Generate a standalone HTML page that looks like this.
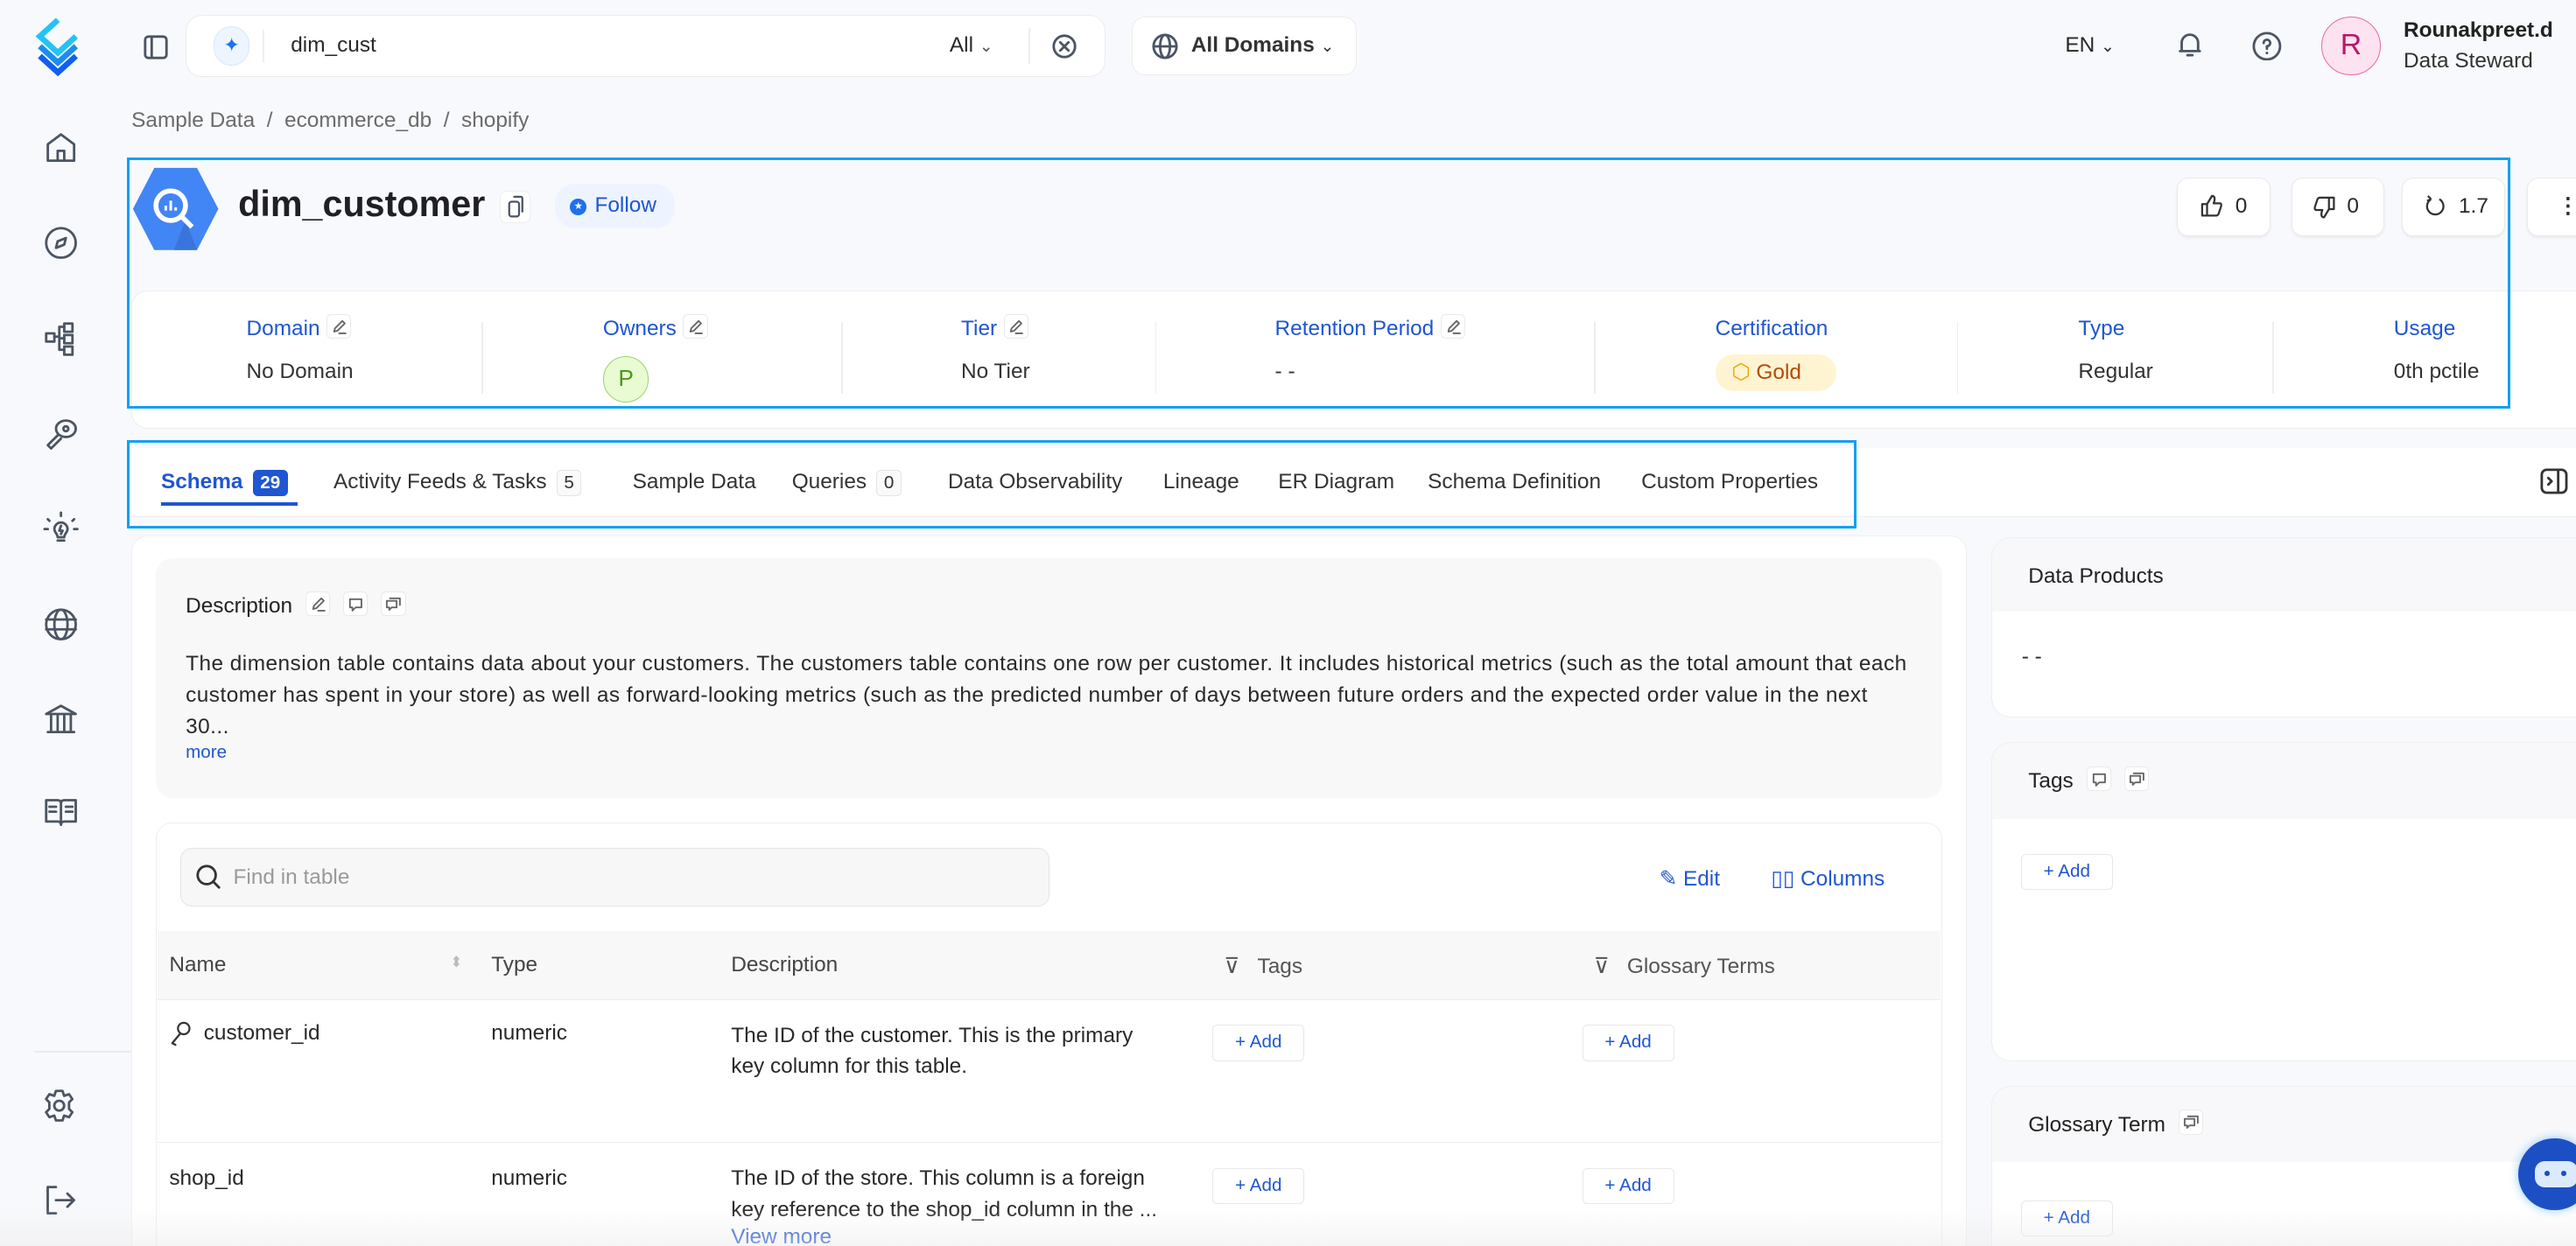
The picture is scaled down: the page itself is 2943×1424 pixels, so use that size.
<!DOCTYPE html>
<html><head><meta charset="utf-8"><style>
*{box-sizing:border-box;margin:0;padding:0}
html,body{width:2943px;height:1424px;overflow:hidden;background:#f8f9fc}
#z{zoom:1.877;width:1568px;height:759px;position:relative;font-family:"Liberation Sans",sans-serif;color:#292929;font-size:13px;overflow:hidden}
.a{position:absolute}
.ic{position:absolute;fill:none;stroke:#4b5563;stroke-width:1.5;stroke-linecap:round;stroke-linejoin:round}
.white{background:#fff}
.lbl{color:#1f56d1;font-size:13px;position:absolute;top:193px}
.val{color:#333;font-size:13px;position:absolute;top:219px}
.sep{position:absolute;top:196px;width:1px;height:44px;background:#eee}
.pen{display:inline-block;width:15px;height:15px;border:1px solid #eaeaea;border-radius:3px;vertical-align:middle;margin-left:4px;position:relative;top:-2px;background:#fff}
.pen svg{position:absolute;left:2px;top:2px;fill:none;stroke:#666;stroke-width:1;stroke-linecap:round;stroke-linejoin:round}
.tab{position:absolute;top:286px;font-size:13px;color:#333}
.badge{display:inline-block;border:1px solid #e4e4e4;border-radius:3px;font-size:11px;padding:0 4px;margin-left:6px;background:#fafafa;line-height:15px}
.btn{position:absolute;background:#fff;border:1px solid #eaeaea;border-radius:7px;box-shadow:0 1px 2px rgba(0,0,0,.06);height:36px;top:108px;font-size:13px;line-height:34px}
.btn svg{position:absolute;top:10px;fill:none;stroke:#333;stroke-width:1.2;stroke-linejoin:round}
.btn span{position:absolute;top:0}
.add{position:absolute;border:1px solid #e8e8e8;border-radius:3px;background:#fff;color:#1f56d1;font-size:11px;width:56px;height:22px;line-height:20px;text-align:center}
.card{position:absolute;background:#fff;border:1px solid #eee;border-radius:12px;overflow:hidden}
.hd{background:#f8f8fa;height:45px;padding:16px 22px;font-size:13px;color:#222}
</style></head><body><div id="z">

<!-- sidebar -->
<svg class="a" style="left:20px;top:10px" width="30" height="38" viewBox="0 0 30 38">
<path d="M15 2 L4 12 L15 22 L26 12" fill="none" stroke="#22c3f5" stroke-width="3.5"/>
<path d="M4 18 L15 28 L26 18" fill="none" stroke="#1a8ef0" stroke-width="3.5"/>
<path d="M4 24 L15 34 L26 24" fill="none" stroke="#0f5ff0" stroke-width="3.5"/></svg>
<svg class="ic" style="left:26px;top:79px" width="22" height="22" viewBox="0 0 22 22"><path d="M3 9 L11 3 L19 9 V19 H3 Z M9 19 V13 H13 V19"/></svg>
<svg class="ic" style="left:26px;top:137px" width="22" height="22" viewBox="0 0 22 22"><circle cx="11" cy="11" r="9"/><path d="M14 8 L9 10 L8 14 L13 12 Z"/></svg>
<svg class="ic" style="left:26px;top:195px" width="22" height="22" viewBox="0 0 22 22"><rect x="2" y="8" width="5" height="5"/><rect x="13" y="2" width="5" height="5"/><rect x="13" y="9" width="5" height="5"/><rect x="13" y="16" width="5" height="5"/><path d="M7 10 H10 V4 H13 M10 11 H13 M10 10 V18 H13"/></svg>
<svg class="ic" style="left:26px;top:253px" width="22" height="22" viewBox="0 0 22 22"><ellipse cx="14" cy="8" rx="6" ry="5"/><circle cx="14" cy="8" r="1.5"/><path d="M9 12 L3 18 L5 20 L11 14"/></svg>
<svg class="ic" style="left:26px;top:311px" width="22" height="22" viewBox="0 0 22 22"><path d="M7 11 A4 4 0 1 1 15 11 C15 13 13 14 13 16 H9 C9 14 7 13 7 11 Z M9 18 H13 M11 1 V3 M3 5 L4 6 M19 5 L18 6 M1 11 H3 M19 11 H21 M11 9 L10 12 H12 L11 14"/></svg>
<svg class="ic" style="left:26px;top:369px" width="22" height="22" viewBox="0 0 22 22"><circle cx="11" cy="11" r="9"/><ellipse cx="11" cy="11" rx="4" ry="9"/><path d="M2 8 H20 M2 14 H20"/></svg>
<svg class="ic" style="left:26px;top:427px" width="22" height="22" viewBox="0 0 22 22"><path d="M2 8 L11 3 L20 8 Z M3 19 H19 M5 9 V18 M9 9 V18 M13 9 V18 M17 9 V18"/></svg>
<svg class="ic" style="left:26px;top:483px" width="22" height="22" viewBox="0 0 22 22"><path d="M2 4 H9 Q11 4 11 6 V19 Q11 17 9 17 H2 Z M20 4 H13 Q11 4 11 6 V19 Q11 17 13 17 H20 Z M4 8 H8 M4 11 H8 M14 8 H18 M14 11 H18"/></svg>
<div class="a" style="left:21px;top:640px;width:95px;height:1px;background:#eaeaea"></div>
<svg class="ic" style="left:25px;top:662px" width="22" height="22" viewBox="0 0 22 22"><circle cx="11" cy="11" r="3"/><path d="M9 2 H13 L14 5 L17 4 L19 7 L17 9 L17 13 L19 15 L17 18 L14 17 L13 20 H9 L8 17 L5 18 L3 15 L5 13 V9 L3 7 L5 4 L8 5 Z"/></svg>
<svg class="ic" style="left:25px;top:720px" width="22" height="22" viewBox="0 0 22 22"><path d="M9 3 H4 V19 H9 M9 11 H20 M16 7 L20 11 L16 15"/></svg>

<!-- top bar -->
<svg class="ic" style="left:87px;top:21px" width="16" height="16" viewBox="0 0 16 16"><rect x="1.5" y="1.5" width="13" height="13" rx="2"/><path d="M5.5 2 V14"/></svg>
<div class="a white" style="left:113px;top:9px;width:560px;height:38px;border:1px solid #ececec;border-radius:10px"></div>
<div class="a" style="left:130px;top:16px;width:22px;height:24px;border-radius:11px;background:#eef5ff;border:1px solid #d6e6ff;color:#1f6ff0;text-align:center;line-height:22px;font-size:12px">✦</div>
<div class="a" style="left:160px;top:18px;width:1px;height:20px;background:#eee"></div>
<div class="a" style="left:177px;top:20px;font-size:13px">dim_cust</div>
<div class="a" style="left:578px;top:20px;font-size:13px">All <span style="font-size:10px;color:#555">⌄</span></div>
<div class="a" style="left:626px;top:17px;width:1px;height:22px;background:#eee"></div>
<svg class="ic" style="left:640px;top:20px" width="16" height="16" viewBox="0 0 16 16"><circle cx="8" cy="8" r="6.5"/><path d="M5.5 5.5 L10.5 10.5 M10.5 5.5 L5.5 10.5"/></svg>
<div class="a white" style="left:689px;top:10px;width:137px;height:36px;border:1px solid #ececec;border-radius:8px"></div>
<svg class="ic" style="left:701px;top:20px" width="16" height="16" viewBox="0 0 16 16"><circle cx="8" cy="8" r="7"/><ellipse cx="8" cy="8" rx="3" ry="7"/><path d="M1 8 H15"/></svg>
<div class="a" style="left:725px;top:20px;font-size:13px;font-weight:bold;color:#333">All Domains <span style="font-weight:normal;font-size:10px">⌄</span></div>
<div class="a" style="left:1257px;top:20px;font-size:13px">EN <span style="font-size:10px">⌄</span></div>
<svg class="ic" style="left:1324px;top:18px" width="18" height="18" viewBox="0 0 18 18"><path d="M4 13 V8 A5 5 0 0 1 14 8 V13 Z M3 13 H15 M7.5 15.5 H10.5"/></svg>
<svg class="ic" style="left:1371px;top:19px" width="18" height="18" viewBox="0 0 18 18"><circle cx="9" cy="9" r="8"/><path d="M7 7 A2 2 0 1 1 9 9 V10.5 M9 13 V13.2"/></svg>
<div class="a" style="left:1413px;top:10px;width:36px;height:36px;border-radius:50%;background:#fde2f0;border:1px solid #e46aa6;color:#b5176a;font-size:18px;text-align:center;line-height:34px">R</div>
<div class="a" style="left:1463px;top:11px;font-size:13px;font-weight:bold;color:#222">Rounakpreet.d</div>
<div class="a" style="left:1463px;top:30px;font-size:13px;color:#333">Data Steward</div>

<div class="a" style="left:80px;top:66px;font-size:13px;color:#6b6b6b">Sample Data &nbsp;/&nbsp; ecommerce_db &nbsp;/&nbsp; shopify</div>

<!-- header -->
<svg class="a" style="left:80px;top:101px" width="54" height="52" viewBox="0 0 54 52"><path d="M14 1 H40 L53 26 L40 51 H14 L1 26 Z" fill="#4285f4"/><path d="M33 33 L40 51 H26 Z" fill="#3a74db"/><circle cx="24" cy="24" r="9" fill="none" stroke="#fff" stroke-width="3"/><path d="M31 31 L37 37" stroke="#fff" stroke-width="3"/><path d="M21 27 V24 M24 27 V21 M27 27 V25" stroke="#fff" stroke-width="1.6"/></svg>
<div class="a" style="left:145px;top:112px;font-size:22px;font-weight:bold;color:#1f1f24">dim_customer</div>
<div class="a white" style="left:304px;top:116px;width:19px;height:20px;border:1px solid #eee;border-radius:4px"></div>
<svg class="ic" style="left:308px;top:119px;stroke-width:1.2" width="12" height="14" viewBox="0 0 12 14"><rect x="2" y="4" width="6" height="9" rx="1.5"/><path d="M5 1 H9 Q10 1 10 2 V10"/></svg>
<div class="a" style="left:338px;top:112px;width:73px;height:27px;border-radius:12px;background:#eef4ff"></div>
<div class="a" style="left:347px;top:121px;width:10px;height:10px;border-radius:50%;background:#1f6ff0;color:#fff;font-size:6px;text-align:center;line-height:10px">★</div>
<div class="a" style="left:362px;top:118px;font-size:13px;color:#1f56d1">Follow</div>

<div class="btn" style="left:1325px;width:57px"><svg style="left:14px" width="14" height="14" viewBox="0 0 14 14"><path d="M1 6 H4 V13 H1 Z M4 6 L7 1 Q9 1 8.5 4 L8 5.5 H12 Q13 6 12.5 7.5 L11 12 Q10.5 13 9.5 13 H4"/></svg><span style="left:35px">0</span></div>
<div class="btn" style="left:1395px;width:56px"><svg style="left:12px;top:11px" width="14" height="14" viewBox="0 0 14 14"><path d="M13 8 H10 V1 H13 Z M10 8 L7 13 Q5 13 5.5 10 L6 8.5 H2 Q1 8 1.5 6.5 L3 2 Q3.5 1 4.5 1 H10"/></svg><span style="left:33px">0</span></div>
<div class="btn" style="left:1462px;width:63px"><svg style="left:13px" width="13" height="14" viewBox="0 0 13 14"><path d="M4 3 A5 5 0 1 0 9 3 M4 3 L2 1 M4 3 L1.5 4"/></svg><span style="left:34px">1.7</span></div>
<div class="btn" style="left:1538px;width:40px;font-weight:bold;padding-left:18px">⋮</div>

<div class="a white" style="left:80px;top:177px;width:1500px;height:84px;border:1px solid #eee;border-radius:10px"></div>
<div class="lbl" style="left:150px">Domain<span class="pen"><svg width="10" height="10" viewBox="0 0 10 10"><path d="M2 8 L2.5 6 L7 1.5 L8.5 3 L4 7.5 Z M5 9 H9"/></svg></span></div>
<div class="val" style="left:150px">No Domain</div>
<div class="sep" style="left:293px"></div>
<div class="lbl" style="left:367px">Owners<span class="pen"><svg width="10" height="10" viewBox="0 0 10 10"><path d="M2 8 L2.5 6 L7 1.5 L8.5 3 L4 7.5 Z M5 9 H9"/></svg></span></div>
<div class="a" style="left:367px;top:217px;width:28px;height:28px;border-radius:50%;background:#e9fbd3;border:1px solid #9bd26b;color:#4a9a1c;text-align:center;line-height:26px;font-size:14px">P</div>
<div class="sep" style="left:512px"></div>
<div class="lbl" style="left:585px">Tier<span class="pen"><svg width="10" height="10" viewBox="0 0 10 10"><path d="M2 8 L2.5 6 L7 1.5 L8.5 3 L4 7.5 Z M5 9 H9"/></svg></span></div>
<div class="val" style="left:585px">No Tier</div>
<div class="sep" style="left:703px"></div>
<div class="lbl" style="left:776px">Retention Period<span class="pen"><svg width="10" height="10" viewBox="0 0 10 10"><path d="M2 8 L2.5 6 L7 1.5 L8.5 3 L4 7.5 Z M5 9 H9"/></svg></span></div>
<div class="val" style="left:776px">- -</div>
<div class="sep" style="left:970px"></div>
<div class="lbl" style="left:1044px">Certification</div>
<div class="a" style="left:1044px;top:216px;width:74px;height:22px;border-radius:11px;background:#fff4d2;color:#b44a0a;font-size:13px;line-height:22px;padding-left:10px"><span style="color:#f5a100">⬡</span> Gold</div>
<div class="sep" style="left:1191px"></div>
<div class="lbl" style="left:1265px">Type</div>
<div class="val" style="left:1265px">Regular</div>
<div class="sep" style="left:1383px"></div>
<div class="lbl" style="left:1457px">Usage</div>
<div class="val" style="left:1457px">0th pctile</div>
<div class="a" style="left:77px;top:96px;width:1451px;height:153px;border:2px solid #14a0f5"></div>

<!-- tabs -->
<div class="a white" style="left:80px;top:273px;width:1500px;height:42px;border-bottom:1px solid #eee"></div>
<div class="tab" style="left:98px;color:#1f56d1;font-weight:bold">Schema<span class="badge" style="background:#1f56d1;color:#fff;border-color:#1f56d1">29</span></div>
<div class="a" style="left:98px;top:306px;width:83px;height:2px;background:#1f56d1"></div>
<div class="tab" style="left:203px">Activity Feeds &amp; Tasks<span class="badge">5</span></div>
<div class="tab" style="left:385px">Sample Data</div>
<div class="tab" style="left:482px">Queries<span class="badge">0</span></div>
<div class="tab" style="left:577px">Data Observability</div>
<div class="tab" style="left:708px">Lineage</div>
<div class="tab" style="left:778px">ER Diagram</div>
<div class="tab" style="left:869px">Schema Definition</div>
<div class="tab" style="left:999px">Custom Properties</div>
<div class="a" style="left:77px;top:268px;width:1053px;height:54px;border:2px solid #14a0f5"></div>
<svg class="ic" style="left:1546px;top:285px;stroke:#333" width="18" height="16" viewBox="0 0 18 16"><rect x="1" y="1" width="15" height="14" rx="3"/><path d="M11 1 V15 M5 6 L7 8 L5 10"/></svg>

<!-- main left -->
<div class="a white" style="left:80px;top:326px;width:1117px;height:440px;border-radius:10px;border:1px solid #f0f0f0"></div>
<div class="a" style="left:95px;top:340px;width:1087px;height:146px;background:#f8f8f8;border-radius:10px"></div>
<div class="a" style="left:113px;top:362px;font-size:13px;color:#222">Description<span class="pen" style="margin-left:8px"><svg width="10" height="10" viewBox="0 0 10 10"><path d="M2 8 L2.5 6 L7 1.5 L8.5 3 L4 7.5 Z M5 9 H9"/></svg></span><span class="pen" style="margin-left:8px"><svg width="10" height="10" viewBox="0 0 10 10"><path d="M1.5 2 H8.5 V7 H5 L3 9 V7 H1.5 Z"/></svg></span><span class="pen" style="margin-left:8px"><svg width="10" height="10" viewBox="0 0 10 10"><path d="M1 3 H7 V7 H4 L2.5 8.5 V7 H1 Z M3 1.5 H9 V5.5"/></svg></span></div>
<div class="a" style="left:113px;top:395px;width:1070px;font-size:13px;line-height:19px;color:#292929;letter-spacing:.25px;white-space:nowrap">The dimension table contains data about your customers. The customers table contains one row per customer. It includes historical metrics (such as the total amount that each<br>customer has spent in your store) as well as forward-looking metrics (such as the predicted number of days between future orders and the expected order value in the next<br>30...</div>
<div class="a" style="left:113px;top:452px;font-size:11px;color:#1f56d1">more</div>

<div class="a white" style="left:95px;top:501px;width:1087px;height:270px;border:1px solid #eee;border-radius:10px"></div>
<div class="a" style="left:110px;top:516px;width:529px;height:36px;background:#f7f7f7;border:1px solid #e4e4e4;border-radius:7px"></div>
<svg class="ic" style="left:119px;top:526px;stroke:#333" width="16" height="16" viewBox="0 0 16 16"><circle cx="7" cy="7" r="5.5"/><path d="M11 11 L14.5 14.5"/></svg>
<div class="a" style="left:142px;top:527px;font-size:13px;color:#9a9a9a">Find in table</div>
<div class="a" style="left:1010px;top:527px;font-size:13px;color:#1f56d1">✎ Edit</div>
<div class="a" style="left:1078px;top:527px;font-size:13px;color:#1f56d1">▯▯ Columns</div>
<div class="a" style="left:96px;top:567px;width:1085px;height:42px;background:#f8f8f8;border-bottom:1px solid #ececec"></div>
<div class="a" style="left:103px;top:580px;color:#444">Name</div>
<div class="a" style="left:274px;top:580px;color:#bbb;font-size:9px">⬍</div>
<div class="a" style="left:299px;top:580px;color:#444">Type</div>
<div class="a" style="left:445px;top:580px;color:#444">Description</div>
<div class="a" style="left:745px;top:580px;color:#555">⊽ &nbsp;&nbsp;Tags</div>
<div class="a" style="left:970px;top:580px;color:#555">⊽ &nbsp;&nbsp;Glossary Terms</div>
<div class="a" style="left:96px;top:695px;width:1085px;height:1px;background:#eee"></div>
<svg class="ic" style="left:103px;top:621px;stroke:#333;stroke-width:1.2" width="14" height="16" viewBox="0 0 14 16"><circle cx="9" cy="5" r="3.5"/><path d="M7 8 L2 14 L4 15"/></svg>
<div class="a" style="left:124px;top:622px">customer_id</div>
<div class="a" style="left:299px;top:622px">numeric</div>
<div class="a" style="left:445px;top:621px;line-height:19px;white-space:nowrap">The ID of the customer. This is the primary<br>key column for this table.</div>
<div class="add" style="left:738px;top:624px">+ Add</div>
<div class="add" style="left:963px;top:624px">+ Add</div>
<div class="a" style="left:103px;top:710px">shop_id</div>
<div class="a" style="left:299px;top:710px">numeric</div>
<div class="a" style="left:445px;top:708px;line-height:19px;white-space:nowrap">The ID of the store. This column is a foreign<br>key reference to the shop_id column in the ...</div>
<div class="a" style="left:445px;top:746px;color:#1f56d1">View more</div>
<div class="add" style="left:738px;top:711px">+ Add</div>
<div class="add" style="left:963px;top:711px">+ Add</div>

<!-- right -->
<div class="card" style="left:1212px;top:327px;width:380px;height:110px"><div class="hd">Data Products</div><div style="padding:20px 18px">- -</div></div>
<div class="card" style="left:1212px;top:452px;width:380px;height:194px"><div class="hd" style="height:46px">Tags<span class="pen" style="margin-left:8px"><svg width="10" height="10" viewBox="0 0 10 10"><path d="M1.5 2 H8.5 V7 H5 L3 9 V7 H1.5 Z"/></svg></span><span class="pen" style="margin-left:8px"><svg width="10" height="10" viewBox="0 0 10 10"><path d="M1 3 H7 V7 H4 L2.5 8.5 V7 H1 Z M3 1.5 H9 V5.5"/></svg></span></div></div>
<div class="add" style="left:1230px;top:520px">+ Add</div>
<div class="card" style="left:1212px;top:661px;width:380px;height:120px"><div class="hd" style="height:46px">Glossary Term<span class="pen" style="margin-left:8px"><svg width="10" height="10" viewBox="0 0 10 10"><path d="M1 3 H7 V7 H4 L2.5 8.5 V7 H1 Z M3 1.5 H9 V5.5"/></svg></span></div></div>
<div class="add" style="left:1230px;top:731px">+ Add</div>
<div class="a" style="left:1533px;top:693px;width:44px;height:44px;border-radius:50%;background:#1d4fc4;box-shadow:0 0 6px #8cc8ff"></div>
<div class="a" style="left:1543px;top:707px;width:26px;height:16px;border-radius:6px;background:#dbeaff"></div>
<div class="a" style="left:1549px;top:713px;width:3px;height:3px;border-radius:50%;background:#1d4fc4"></div>
<div class="a" style="left:1559px;top:713px;width:3px;height:3px;border-radius:50%;background:#1d4fc4"></div>
<div class="a" style="left:0;top:735px;width:1568px;height:24px;background:linear-gradient(rgba(255,255,255,0),rgba(235,235,235,.5))"></div>
</div></body></html>
